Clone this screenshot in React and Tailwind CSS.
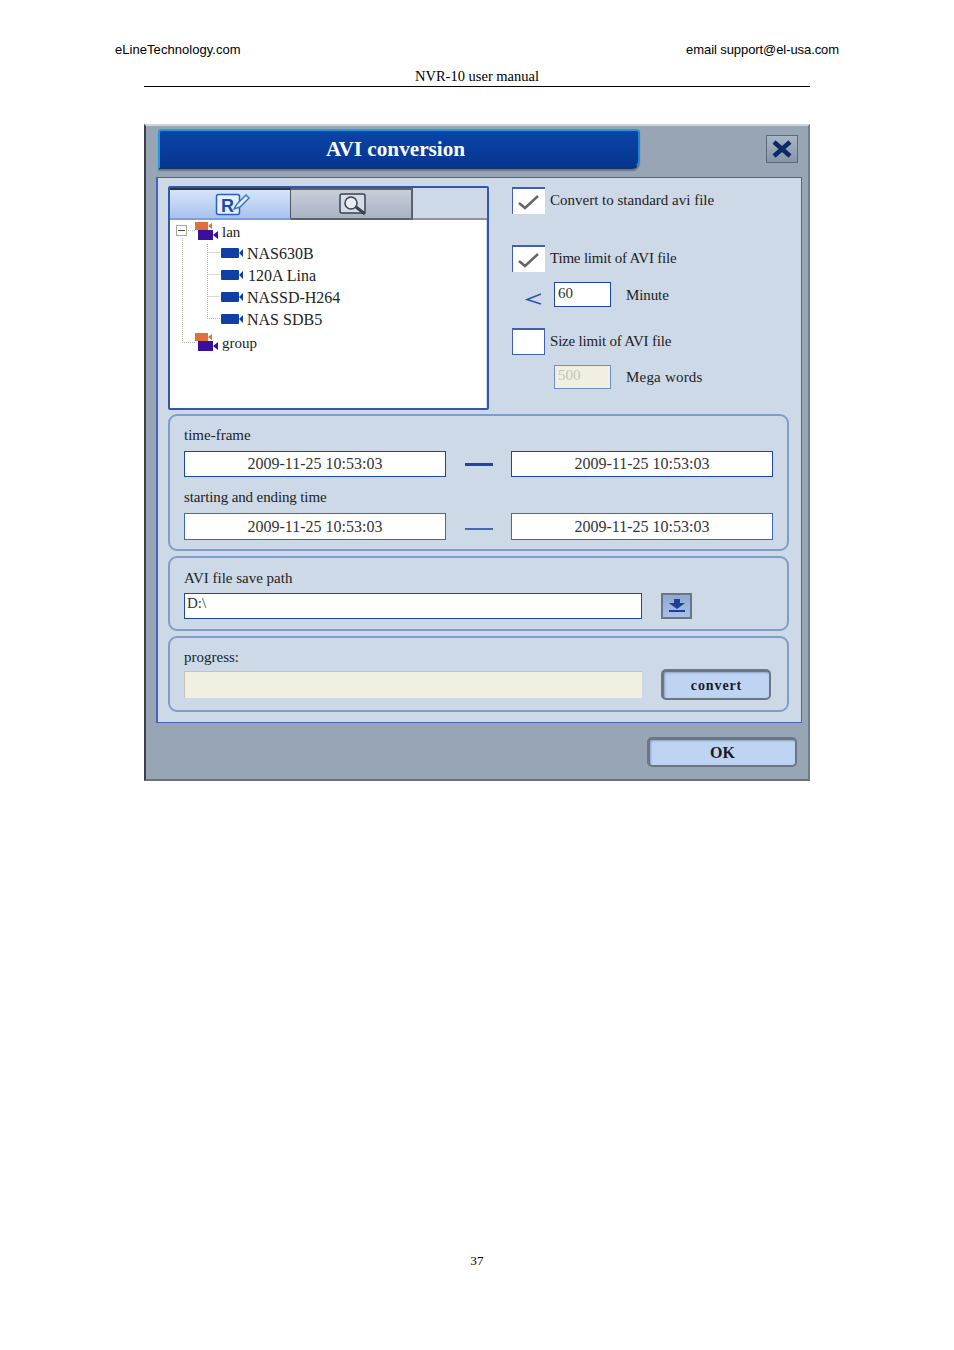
const serif = "font-['Liberation_Serif',serif]";

function Camera({ color = "#0f3fa3", className = "" }) {
  return (
    <svg width="24" height="12" viewBox="0 0 24 12" className={className}>
      <rect x="1" y="1" width="18" height="10" rx="1" fill={color} />
      <path d="M19 6 L23 2 V10 Z" fill={color} />
    </svg>
  );
}

function GroupIcon() {
  return (
    <svg width="24" height="20" viewBox="0 0 24 20" className="shrink-0">
      <rect x="0" y="1" width="13" height="8" fill="#e0703a" />
      <path d="M13 5 L17 2 V8 Z" fill="#e0703a" />
      <rect x="3" y="9" width="15" height="10" fill="#3a0f9c" />
      <path d="M18 14 L23 10 V18 Z" fill="#3a0f9c" />
    </svg>
  );
}

function TreeRow({ icon, label, className = "", small }) {
  return (
    <div className={`h-[22px] flex items-center ${className}`}>
      {icon}
      <span className={`${small ? "text-[15px]" : "text-[16px]"} pt-[2px] text-[#222] leading-none`}>{label}</span>
    </div>
  );
}

function Check({ checked }) {
  return (
    <div className={`w-[33px] h-[27px] shrink-0 bg-white border-[#3f5fb5] border-t-2 border-l ${checked ? "border-r-0 border-b-0" : "border-r border-b"} flex items-center justify-center`}>
      {checked && (
        <svg width="24" height="18" viewBox="0 0 24 18">
          <path d="M2 10 L8 15 L21 3" fill="none" stroke="#666" strokeWidth="2.5" />
        </svg>
      )}
    </div>
  );
}

function DateBox({ thin }) {
  return (
    <div className={`w-[262px] shrink-0 bg-white border flex items-center justify-center text-[16px] text-[#333] leading-none ${thin ? "h-[27px] border-[#3d68bd]" : "h-[26px] border-[#1c46a8]"}`}>
      2009-11-25 10:53:03
    </div>
  );
}

function Section({ className = "", children }) {
  return (
    <div className={`w-[621px] ml-[10px] rounded-[9px] border-2 border-[#7f9ccd] px-[14px] ${className}`}>
      {children}
    </div>
  );
}

function RaisedButton({ className = "", children }) {
  return (
    <div className={`rounded-[5px] bg-[#bfd3f2] border-2 border-t-[3px] border-l-[3px] border-[#6d7684] shadow-[inset_1px_1px_2px_#8fa3c4] flex items-center justify-center font-bold text-[#161b26] ${className}`}>
      {children}
    </div>
  );
}

export default function App() {
  return (
    <div className="w-[954px] h-[1350px] bg-white pt-[42px] flex flex-col items-center">
      <div className="w-[724px] flex justify-between text-[13px] leading-[15px] text-black font-['Liberation_Sans',sans-serif]">
        <span className="tracking-[0.05px]">eLineTechnology.com</span>
        <span className="tracking-[-0.08px]">email support@el-usa.com</span>
      </div>
      <div className={`${serif} mt-[12px] w-[666px] h-[18px] border-b border-black text-center text-[14.5px] leading-[15px] text-black`}>
        NVR-10 user manual
      </div>

      {/* dialog */}
      <div className={`${serif} mt-[37px] w-[666px] h-[657px] bg-[#98a5b5] border-l-2 border-l-[#3a3f4a] border-t-2 border-t-[#cfd4da] border-b-2 border-b-[#6a727c] border-r-2 border-r-[#6f7c8c] flex flex-col`}>
        <div className="h-[51px] flex items-start">
          <div className="ml-[12px] mt-[3px] w-[482px] h-[40px] pr-[7px] pt-[2px] rounded-br-[8px] rounded-tr-[4px] rounded-tl-[3px] border-t-2 border-l-2 border-t-[#1f9be0] border-l-[#1f9be0] border-r-2 border-r-[#1f86cf] border-b-2 border-b-[#12345e] bg-[linear-gradient(#0a45a8,#073590)] shadow-[0_2px_1px_#6a7586] flex items-center justify-center text-white font-bold text-[21.2px] leading-none">
            AVI conversion
          </div>
          <div className="ml-[126px] mt-[9px] w-[32px] h-[28px] bg-[linear-gradient(#a9b6c6,#8795a8)] border border-[#5e6a7a] flex items-center justify-center">
            <svg width="22" height="18" viewBox="0 0 22 18">
              <path d="M3 2 L19 16 M19 2 L3 16" stroke="#0d2a66" strokeWidth="4.5" />
            </svg>
          </div>
        </div>

        {/* main panel */}
        <div className="ml-[10px] w-[646px] h-[546px] bg-[#cdd9e7] border border-l-2 border-[#4464b8] flex flex-col">
          <div className="h-[236px] flex items-start">
            {/* tree panel */}
            <div className="ml-[10px] mt-[8px] w-[321px] h-[224px] border-2 border-[#3556ad] rounded-[2px] flex flex-col">
              <div className="h-[32px] flex shrink-0">
                <div className="w-[121px] bg-[linear-gradient(#d6e4fa,#a9c3ee)] border-t-2 border-t-[#2c3342] border-r border-r-[#4b5666] border-b-2 border-b-[#7f9ee0] flex items-center justify-center pl-[6px]">
                  <svg width="36" height="24" viewBox="0 0 36 24">
                    <rect x="1.5" y="2.5" width="23" height="20" rx="2" fill="#e6effc" stroke="#2a5fc0" strokeWidth="1.5" />
                    <text x="6" y="20" fontFamily="Liberation Sans" fontWeight="700" fontSize="18" fill="#1f48a8">R</text>
                    <path d="M19 17 L22 12 L31 3 L34 6 L25 15 Z" fill="#e6effc" stroke="#3c78d0" strokeWidth="1.5" />
                  </svg>
                </div>
                <div className="w-[122px] bg-[linear-gradient(#c8cfda,#aab3c4)] border-t-2 border-t-[#5a6270] border-r-2 border-r-[#5a6270] border-b-2 border-b-[#5a6270] flex items-center justify-center pl-[8px]">
                  <svg width="34" height="24" viewBox="0 0 34 24">
                    <rect x="2" y="2" width="25" height="19" rx="2" fill="#d7dde6" stroke="#3b4250" strokeWidth="1.5" />
                    <circle cx="13" cy="11" r="6" fill="#e9edf3" stroke="#3b4250" strokeWidth="1.5" />
                    <path d="M18 15 L27 22" stroke="#3b4250" strokeWidth="3" />
                  </svg>
                </div>
                <div className="flex-1 border-b-2 border-b-[#8d929b]" />
              </div>
              <div className="relative flex-1 mr-[1px] bg-white">
                <svg width="70" height="130" className="absolute left-0 top-0">
                  <g stroke="#b5b5a8" strokeWidth="1" strokeDasharray="1 1" fill="none">
                    <path d="M12.5 18 V122.5 H26" />
                    <path d="M37.5 24 V98.5 H50" />
                    <path d="M37.5 32.5 H50 M37.5 54.5 H50 M37.5 76.5 H50" />
                    <path d="M18 10.5 H26" />
                  </g>
                </svg>
                <div className="absolute left-[6px] top-[5px] w-[11px] h-[11px] border border-[#a8a898] bg-white flex items-center justify-center">
                  <div className="w-[7px] h-px bg-[#444]" />
                </div>
                <TreeRow small className="relative pl-[25px] gap-[3px]" icon={<GroupIcon />} label="lan" />
                <TreeRow className="relative pl-[50px] gap-[3px]" icon={<Camera />} label="NAS630B" />
                <TreeRow className="relative pl-[50px] gap-[4px]" icon={<Camera />} label="120A Lina" />
                <TreeRow className="relative pl-[50px] gap-[3px]" icon={<Camera />} label="NASSD-H264" />
                <TreeRow className="relative pl-[50px] gap-[3px]" icon={<Camera />} label="NAS SDB5" />
                <TreeRow small className="relative mt-px pl-[25px] gap-[3px]" icon={<GroupIcon />} label="group" />
              </div>
            </div>

            {/* options */}
            <div className="ml-[23px] mt-[9px] w-[270px] text-[15px] text-[#222] leading-none">
              <div className="flex items-center gap-[5px]">
                <Check checked />
                <span>Convert to standard avi file</span>
              </div>
              <div className="mt-[31px] flex items-center gap-[5px]">
                <Check checked />
                <span className="tracking-[-0.2px]">Time limit of AVI file</span>
              </div>
              <div className="mt-[10px] flex items-center">
                <svg width="18" height="14" viewBox="0 0 18 14" className="ml-[13px] mt-[8px]">
                  <path d="M16 2 L2 7.5 L16 12" fill="none" stroke="#2f54b0" strokeWidth="1.6" />
                </svg>
                <div className="ml-[11px] w-[57px] h-[25px] bg-white border border-[#1c46a8] pl-[3px] pt-[3px] text-[#333]">60</div>
                <span className="ml-[15px] mt-[2px] tracking-[-0.1px]">Minute</span>
              </div>
              <div className="mt-[21px] flex items-center gap-[5px]">
                <Check />
                <span className="tracking-[-0.2px]">Size limit of AVI file</span>
              </div>
              <div className="mt-[10px] flex items-center">
                <div className="ml-[42px] w-[57px] h-[24px] bg-[#f1efe2] border border-[#6f8ec9] pl-[3px] pt-[2px] text-[#c4c4b4]">500</div>
                <span className="ml-[15px] mt-[1px] tracking-[0.2px]">Mega words</span>
              </div>
            </div>
          </div>

          {/* time */}
          <Section className="h-[137px] text-[15px] text-[#222] leading-none">
            <div className="mt-[12px]">time-frame</div>
            <div className="mt-[8px] flex items-center">
              <DateBox />
              <div className="ml-[19px] w-[28px] h-[3px] bg-[#1c46a8]" />
              <div className="ml-[18px]"><DateBox /></div>
            </div>
            <div className="mt-[13px] tracking-[-0.12px]">starting and ending time</div>
            <div className="mt-[8px] flex items-center">
              <DateBox thin />
              <div className="ml-[19px] w-[28px] h-[2px] bg-[#3d68bd] mt-[4px]" />
              <div className="ml-[18px]"><DateBox thin /></div>
            </div>
          </Section>

          {/* save path */}
          <Section className="mt-[5px] h-[75px] text-[15px] text-[#222] leading-none">
            <div className="mt-[13px]">AVI file save path</div>
            <div className="mt-[7px] flex items-center">
              <div className="w-[458px] h-[26px] bg-white border border-[#1c46a8] pl-[2px] pt-[2px] text-[#333]">D:\</div>
              <div className="ml-[19px] w-[31px] h-[26px] bg-[linear-gradient(#8fa8d4,#a9c1e8)] border-2 border-[#6b7584] flex items-center justify-center">
                <svg width="18" height="14" viewBox="0 0 18 14">
                  <path d="M6 0 H12 V4 H17 L9 10 L1 4 H6 Z M1 11 H17 V13 H1 Z" fill="#1f3f92" />
                </svg>
              </div>
            </div>
          </Section>

          {/* progress */}
          <Section className="mt-[5px] h-[76px] text-[15px] text-[#222] leading-none">
            <div className="mt-[12px]">progress:</div>
            <div className="mt-[4px] flex items-center">
              <div className="w-[458px] h-[27px] bg-[#f1efe2] border-t border-l border-[#c4c4b8]" />
              <RaisedButton className="ml-[19px] w-[110px] h-[31px] pt-[1px] text-[14px] tracking-[0.9px]">convert</RaisedButton>
            </div>
          </Section>
        </div>

        {/* footer */}
        <div className="flex justify-end pr-[11px] pt-[14px]">
          <RaisedButton className="w-[150px] h-[30px] text-[16px]">OK</RaisedButton>
        </div>
      </div>

      <div className={`${serif} mt-[472px] text-[13.3px] leading-[15px] text-black`}>37</div>
    </div>
  );
}
